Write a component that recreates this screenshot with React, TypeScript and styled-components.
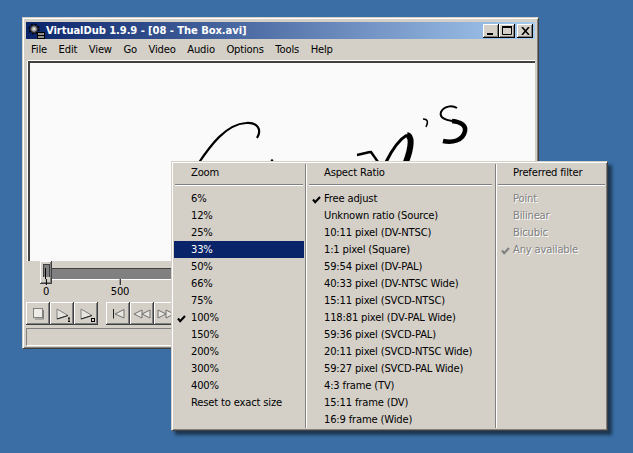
import React from 'react'
import styled, { createGlobalStyle } from 'styled-components'

const GlobalStyle = createGlobalStyle`
  html, body {
    margin: 0;
    padding: 0;
    background: #3a6ea5;
  }
  * {
    box-sizing: border-box;
  }
`

const Desktop = styled.div`
  position: relative;
  width: 633px;
  height: 453px;
  padding: 17px 0 0 22px;
  overflow: hidden;
  background: #3a6ea5;
  font-family: 'DejaVu Sans', sans-serif;
  font-size: 10px;
  letter-spacing: -0.18px;
  color: #000;
`

const Window = styled.div`
  display: flex;
  flex-direction: column;
  width: 517px;
  height: 332px;
  padding: 4px 3px 3px;
  background: #d4d0c8;
  border: 1px solid;
  border-color: #d4d0c8 #404040 #404040 #d4d0c8;
  box-shadow: inset 1px 1px 0 #fff, inset -1px -1px 0 #808080;
`

const TitleBar = styled.div`
  display: flex;
  align-items: center;
  height: 17px;
  flex: none;
  padding: 0 2px;
  background: linear-gradient(90deg, #0a246a, #a6caf0);
  color: #fff;
  font-weight: bold;
  letter-spacing: -0.08px;
`

const TitleText = styled.span`
  margin-left: 1px;
  flex: 1;
  white-space: nowrap;
`

const CaptionButton = styled.div<{ $gap?: number }>`
  display: flex;
  align-items: center;
  justify-content: center;
  width: 16px;
  height: 14px;
  margin-left: ${({ $gap }) => $gap ?? 0}px;
  background: #d4d0c8;
  box-shadow: inset -1px -1px 0 #000, inset 1px 1px 0 #fff, inset -2px -2px 0 #808080;
`

const MenuBar = styled.div`
  display: flex;
  align-items: center;
  height: 21px;
  flex: none;
  padding-left: 5px;
  gap: 11.6px;
`

const VideoPane = styled.div`
  height: 200px;
  flex: none;
  margin: 1px 0 0 2px;
  background: #fafafa;
  border-top: 2px solid #404040;
  border-left: 2px solid #404040;
  box-shadow: 0 -1px 0 #fff, -1px 0 0 #fff;
`

const Scribble = styled.svg`
  display: block;
`

const Timeline = styled.div`
  position: relative;
  height: 41px;
  flex: none;
`

const Track = styled.div`
  position: absolute;
  left: 14px;
  right: 0;
  top: 7px;
  height: 11px;
  background: #808080;
  border-top: 1px solid #404040;
  box-shadow: 0 1px 0 #fff;
`

const Thumb = styled.div`
  position: absolute;
  left: 14px;
  top: 0;
  width: 12px;
  height: 23px;
  background: #d4d0c8;
  box-shadow: inset -1px -1px 0 #404040, inset 1px 1px 0 #fff, inset -2px -2px 0 #808080;
  &::before {
    content: '';
    position: absolute;
    left: 3px;
    top: 3px;
    width: 5px;
    height: 12px;
    background: #808080;
    border: 1px solid #404040;
    border-bottom: none;
  }
  &::after {
    content: '';
    position: absolute;
    left: 5px;
    top: 7px;
    width: 1px;
    height: 11px;
    background: #000;
  }
`

const Tick = styled.span<{ $at: number }>`
  position: absolute;
  left: ${({ $at }) => $at}px;
  top: 25px;
  transform: translateX(-50%);
  text-align: center;
  line-height: 12px;
  &::before {
    content: '';
    position: absolute;
    left: 50%;
    top: -7px;
    width: 1px;
    height: 6px;
    background: #000;
  }
`

const ToolRow = styled.div`
  display: flex;
  height: 23px;
  flex: none;
`

const ToolGroup = styled.div`
  display: flex;
  margin-right: 8px;
`

const ToolButton = styled.div`
  width: 24px;
  height: 23px;
  background: #d4d0c8;
  box-shadow: inset -1px -1px 0 #404040, inset 1px 1px 0 #fff, inset -2px -2px 0 #808080;
`

const ToolIcon = styled.svg`
  display: block;
`

const StatusBar = styled.div`
  height: 18px;
  flex: none;
  margin-top: 3px;
  border: 1px solid;
  border-color: #808080 #fff #fff #808080;
`

const PopupMenu = styled.div`
  position: absolute;
  left: 171px;
  top: 161px;
  display: flex;
  width: 437px;
  height: 270px;
  padding: 2px 0 2px 2px;
  background: #d4d0c8;
  border: 1px solid;
  border-color: #d4d0c8 #404040 #404040 #d4d0c8;
  box-shadow: inset 1px 1px 0 #fff, inset -1px -1px 0 #808080, 4px 4px 3px rgba(0, 0, 0, 0.5);
`

const MenuColumn = styled.div<{ $width: number; $pad: number; $last: boolean }>`
  width: ${({ $width }) => $width}px;
  flex: none;
  padding: 0 1px 0 ${({ $pad }) => $pad}px;
  border-right: ${({ $last }) => ($last ? 'none' : '1px solid #808080')};
  box-shadow: ${({ $last }) => ($last ? 'none' : '1px 0 0 #fff')};
`

const MenuHeader = styled.div<{ $indent: number }>`
  display: flex;
  align-items: center;
  height: 17px;
  padding-left: ${({ $indent }) => $indent}px;
`

const MenuRule = styled.div<{ $left: number; $right: number }>`
  height: 2px;
  margin: 3px ${({ $right }) => $right}px 4px ${({ $left }) => $left}px;
  background: #808080;
  border-bottom: 1px solid #fff;
`

const MenuItem = styled.div<{ $indent: number; $active?: boolean; $disabled?: boolean }>`
  position: relative;
  display: flex;
  align-items: center;
  height: 17px;
  padding-left: ${({ $indent }) => $indent}px;
  white-space: nowrap;
  background: ${({ $active }) => ($active ? '#0a246a' : 'transparent')};
  color: ${({ $active, $disabled }) => ($active ? '#fff' : $disabled ? '#808080' : '#000')};
  text-shadow: ${({ $disabled }) => ($disabled ? '1px 1px 0 #fff' : 'none')};
`

const CheckMark = styled.svg`
  position: absolute;
  left: 3px;
  top: 6px;
`

const Check = ({ color = '#000' }: { color?: string }) => (
  <CheckMark width="9" height="8" viewBox="0 0 9 8">
    <path d="M1 3.5 L3.2 6.2 L8 1" fill="none" stroke={color} strokeWidth="2.1" />
  </CheckMark>
)

const menus = ['File', 'Edit', 'View', 'Go', 'Video', 'Audio', 'Options', 'Tools', 'Help']

const columns = [
  {
    title: 'Zoom',
    width: 132,
    pad: 0,
    indent: 17,
    ruleLeft: 1,
    ruleRight: 1,
    checked: '100%',
    items: ['6%', '12%', '25%', '33%', '50%', '66%', '75%', '100%', '150%', '200%', '300%', '400%', 'Reset to exact size'],
  },
  {
    title: 'Aspect Ratio',
    width: 190,
    pad: 3,
    indent: 15,
    ruleLeft: 0,
    ruleRight: 2,
    checked: 'Free adjust',
    items: [
      'Free adjust',
      'Unknown ratio (Source)',
      '10:11 pixel (DV-NTSC)',
      '1:1 pixel (Square)',
      '59:54 pixel (DV-PAL)',
      '40:33 pixel (DV-NTSC Wide)',
      '15:11 pixel (SVCD-NTSC)',
      '118:81 pixel (DV-PAL Wide)',
      '59:36 pixel (SVCD-PAL)',
      '20:11 pixel (SVCD-NTSC Wide)',
      '59:27 pixel (SVCD-PAL Wide)',
      '4:3 frame (TV)',
      '15:11 frame (DV)',
      '16:9 frame (Wide)',
    ],
  },
  {
    title: 'Preferred filter',
    width: 111,
    pad: 2,
    indent: 15,
    ruleLeft: 0,
    ruleRight: 1,
    checked: 'Any available',
    disabled: true,
    items: ['Point', 'Bilinear', 'Bicubic', 'Any available'],
  },
]

const AppIcon = () => (
  <svg width="17" height="16" viewBox="0 0 17 16">
    <circle cx="6" cy="6" r="4.6" fill="none" stroke="#000" strokeWidth="2" strokeDasharray="2 1.6" />
    <circle cx="6" cy="6" r="3.4" fill="#a0a0a0" stroke="#222" />
    <circle cx="6" cy="6" r="1.2" fill="#e0e0e0" />
    <rect x="9.5" y="9.5" width="7" height="6" fill="#909090" stroke="#000" />
    <path d="M9.5 12.5 H16.5" stroke="#000" />
  </svg>
)

const triangle = 'M7 7 L18 13.5 L7 17 Z'

const transportIcons = [
  <g key="stop">
    <rect x="7.5" y="6.5" width="9" height="9" fill="#eeece6" stroke="#222" strokeDasharray="1 1" />
    <path d="M17.5 8 V17 H9" fill="none" stroke="#808080" />
  </g>,
  <g key="mark-in">
    <path d={triangle} fill="#e8e6e0" stroke="#808080" />
    <path d="M7 17 L18 13.5" stroke="#222" />
    <path d="M18 16 H20 M19 16 V19 M18 19.5 H20" stroke="#000" />
  </g>,
  <g key="mark-out">
    <path d={triangle} fill="#e8e6e0" stroke="#808080" />
    <path d="M7 17 L18 13.5" stroke="#222" />
    <rect x="17.5" y="16.5" width="3" height="3" fill="none" stroke="#000" />
  </g>,
]

const seekIcons = [
  <g key="start">
    <path d="M7.5 7 V16.5" stroke="#222" />
    <path d="M18 7.5 L9 12 L18 16 Z" fill="#e8e6e0" stroke="#707070" />
  </g>,
  <g key="back">
    <path d="M12 8 L4 12 L12 16 Z M20 8 L12 12 L20 16 Z" fill="#e8e6e0" stroke="#707070" />
  </g>,
  <g key="forward">
    <path d="M4 8 L12 12 L4 16 Z M12 8 L20 12 L12 16 Z" fill="#e8e6e0" stroke="#707070" />
  </g>,
]

export default function App() {
  return (
    <Desktop>
      <GlobalStyle />
      <Window>
        <TitleBar>
          <AppIcon />
          <TitleText>VirtualDub 1.9.9 - [08 - The Box.avi]</TitleText>
          <CaptionButton>
            <svg width="8" height="8"><rect x="0" y="6" width="6" height="2" fill="#000" /></svg>
          </CaptionButton>
          <CaptionButton>
            <svg width="10" height="9"><path d="M.5 1 H9.5 V8.5 H.5 Z" fill="none" stroke="#000" /><rect width="10" height="2" fill="#000" /></svg>
          </CaptionButton>
          <CaptionButton $gap={2}>
            <svg width="9" height="8"><path d="M1 0 L8 8 M8 0 L1 8" stroke="#000" strokeWidth="1.6" /></svg>
          </CaptionButton>
        </TitleBar>
        <MenuBar>
          {menus.map(m => (
            <span key={m}>{m}</span>
          ))}
        </MenuBar>
        <VideoPane>
          <Scribble width="505" height="198" viewBox="30 63 505 198">
            <path d="M198 164 C210 146 226 124 246 123 C258 122 262 130 257 138" fill="none" stroke="#000" strokeWidth="2.2" />
            <path d="M357 155 C363 154 368 152 371 152 L378 162" fill="none" stroke="#000" strokeWidth="2.4" />
            <path d="M386 162 C392 150 400 139 407 135" fill="none" stroke="#000" strokeWidth="3" />
            <path d="M407 135 C412 136 412 146 406 162" fill="none" stroke="#000" strokeWidth="6" />
            <path d="M423 119 Q430 119 426 127" fill="none" stroke="#000" strokeWidth="1.5" />
            <path d="M457 108 C452 105 444 106 441 112 C439 118 446 120 452 121" fill="none" stroke="#000" strokeWidth="2" />
            <path d="M452 121 C462 122 466 126 465 131 C463 141 452 143 443 141" fill="none" stroke="#000" strokeWidth="4.5" />
            <circle cx="272" cy="160.5" r="1.2" fill="#000" />
          </Scribble>
        </VideoPane>
        <Timeline>
          <Track />
          <Thumb />
          <Tick $at={20}>0</Tick>
          <Tick $at={94}>500</Tick>
        </Timeline>
        <ToolRow>
          {[transportIcons, seekIcons].map((group, g) => (
            <ToolGroup key={g}>
              {group.map((icon, i) => (
                <ToolButton key={i}>
                  <ToolIcon width="24" height="23">{icon}</ToolIcon>
                </ToolButton>
              ))}
            </ToolGroup>
          ))}
        </ToolRow>
        <StatusBar />
      </Window>

      <PopupMenu>
        {columns.map((col, c) => (
          <MenuColumn key={col.title} $width={col.width} $pad={col.pad} $last={c === columns.length - 1}>
            <MenuHeader $indent={col.indent}>{col.title}</MenuHeader>
            <MenuRule $left={col.ruleLeft} $right={col.ruleRight} />
            {col.items.map(item => (
              <MenuItem key={item} $indent={col.indent} $active={item === '33%'} $disabled={col.disabled}>
                {item === col.checked && <Check color={col.disabled ? '#808080' : '#000'} />}
                {item}
              </MenuItem>
            ))}
          </MenuColumn>
        ))}
      </PopupMenu>
    </Desktop>
  )
}
